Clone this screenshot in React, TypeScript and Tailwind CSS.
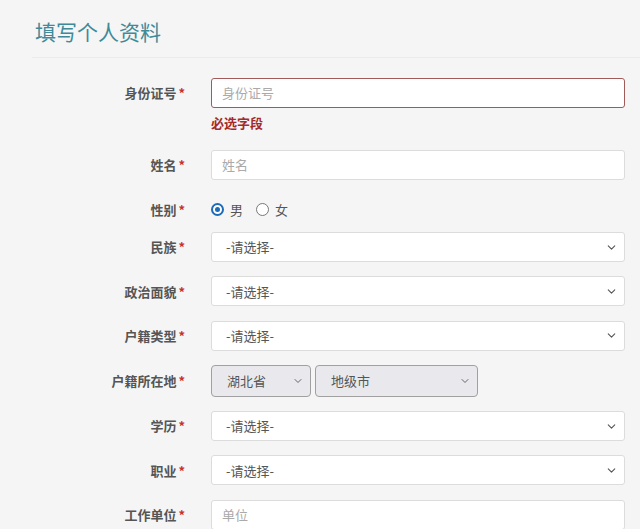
import { ChevronDown } from "lucide-react";

const font = { fontFamily: '"Noto Sans CJK SC", "Noto Sans", sans-serif' };

const Label = ({ text }: { text: string }) => (
    <div className="w-[186px] shrink-0 pr-[1px] text-right text-[13px] font-bold text-[#555]">
        {text}
        <span className="ml-[2px] text-[#c9302c]">*</span>
    </div>
);

const Select = ({ value, className = "w-[414px]" }: { value: string; className?: string }) => (
    <div className={`flex h-[30px] items-center justify-between rounded-[3px] border border-[#dcdcdc] bg-white pl-[14px] pr-[6px] text-[13px] text-[#555] ${className}`}>
        <span>{value}</span>
        <ChevronDown size={13} strokeWidth={2} className="text-[#555]" />
    </div>
);

const DisabledSelect = ({ value, className }: { value: string; className: string }) => (
    <div className={`flex h-[32px] items-center justify-between rounded-[4px] border border-[#a0a0a0] bg-[#e9e9ed] pl-[15px] pr-[6px] text-[13px] text-[#555] ${className}`}>
        <span>{value}</span>
        <ChevronDown size={12} strokeWidth={2} className="text-[#666]" />
    </div>
);

const Input = ({ placeholder, error }: { placeholder: string; error?: boolean }) => (
    <div
        className={`flex h-[30px] w-[414px] items-center rounded-[3px] border bg-white pl-[10px] text-[13px] text-[#aaa] ${
            error ? "border-[#a05a5a]" : "border-[#dcdcdc]"
        }`}
    >
        {placeholder}
    </div>
);

const Row = ({ label, children }: { label: string; children: React.ReactNode }) => (
    <div className="flex items-center gap-[25px]">
        <Label text={label} />
        {children}
    </div>
);

export default function App() {
    return (
        <div className="min-h-[529px] w-[640px] overflow-hidden bg-[#f5f5f5]" style={font}>
            <div className="pl-[35px] pt-[14px]">
                <h1 className="text-[21px] leading-[34px] text-[#3e8a99]">填写个人资料</h1>
            </div>
            <div className="ml-[32px] mt-[9px] border-t border-[#ebebeb]" />

            <div className="mt-[20px] flex flex-col">
                <div>
                    <Row label="身份证号">
                        <Input placeholder="身份证号" error />
                    </Row>
                    <div className="ml-[211px] mt-[6px] text-[13px] font-bold leading-[18px] text-[#a52a2a]">必选字段</div>
                </div>

                <div className="mt-[18px]">
                    <Row label="姓名">
                        <Input placeholder="姓名" />
                    </Row>
                </div>

                <div className="mt-[20px] h-[22px]">
                    <Row label="性别">
                        <div className="flex items-center text-[13px] text-[#555]">
                            <span className="flex h-[13px] w-[13px] items-center justify-center rounded-full border-2 border-[#1e6bb8] bg-white">
                                <span className="h-[5px] w-[5px] rounded-full bg-[#1e6bb8]" />
                            </span>
                            <span className="ml-[6px]">男</span>
                            <span className="ml-[13px] h-[13px] w-[13px] rounded-full border border-[#777] bg-white" />
                            <span className="ml-[6px]">女</span>
                        </div>
                    </Row>
                </div>

                <div className="mt-[10px] flex flex-col gap-[14.3px]">
                    <Row label="民族">
                        <Select value="-请选择-" />
                    </Row>
                    <Row label="政治面貌">
                        <Select value="-请选择-" />
                    </Row>
                    <Row label="户籍类型">
                        <Select value="-请选择-" />
                    </Row>
                    <Row label="户籍所在地">
                        <div className="flex gap-[4px]">
                            <DisabledSelect value="湖北省" className="w-[100px]" />
                            <DisabledSelect value="地级市" className="w-[163px]" />
                        </div>
                    </Row>
                    <Row label="学历">
                        <Select value="-请选择-" />
                    </Row>
                    <Row label="职业">
                        <Select value="-请选择-" />
                    </Row>
                    <Row label="工作单位">
                        <Input placeholder="单位" />
                    </Row>
                </div>
            </div>
        </div>
    );
}
